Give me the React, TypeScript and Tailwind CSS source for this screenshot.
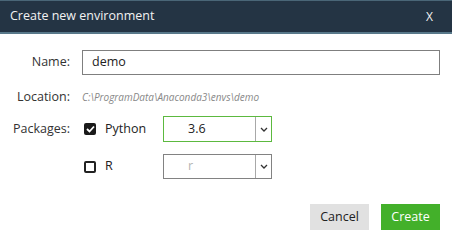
import React from "react";

const font = { fontFamily: '"Open Sans", "Noto Sans", sans-serif' };

function Chevron() {
  return (
    <svg width="8" height="5" viewBox="0 0 8 5" fill="none">
      <path d="M1 1 L4 4 L7 1" stroke="#333" strokeWidth="1.3" />
    </svg>
  );
}

function Select({ value, active, muted }: { value: string; active?: boolean; muted?: boolean }) {
  return (
    <div
      className={`flex h-full w-[109px] border ${active ? "border-[#5cb93f]" : "border-[#828282]"} bg-white`}
    >
      <div className={`flex flex-1 items-center pl-[24px] text-[12.5px] ${muted ? "text-[#b5b5b5]" : "text-[#222]"}`}>
        {value}
      </div>
      <div className="flex w-[16px] items-center justify-center border-l border-[#a8a8a8]">
        <Chevron />
      </div>
    </div>
  );
}

export default function App() {
  return (
    <div className="h-[244px] w-[452px] bg-white" style={font}>
      <div className="flex h-[34px] items-center justify-between border-t border-b-2 border-t-[#4a6677] border-b-[#58788a] bg-[#243444] pl-[10px] pr-[19px] text-[12.5px] text-[#f2f2f2]">
        <span>Create new environment</span>
        <span className="text-[12px]">X</span>
      </div>

      <div className="flex flex-col pr-[12px]">
        <div className="mt-[16px] flex h-[25px] items-center">
          <div className="w-[70px] text-right text-[12.5px] text-[#333]">Name:</div>
          <div className="ml-[12px] flex h-full flex-1 items-center border border-[#7f7f7f] pl-[9px] text-[12.5px] text-[#222]">
            demo
          </div>
        </div>

        <div className="mt-[12px] flex h-[20px] items-center">
          <div className="w-[70px] text-right text-[12.5px] text-[#333]">Location:</div>
          <div className="ml-[12px] text-[10px] italic text-[#888]">C:\ProgramData\Anaconda3\envs\demo</div>
        </div>

        <div className="mt-[9px] flex h-[26px] items-center">
          <div className="w-[70px] text-right text-[12.5px] text-[#333]">Packages:</div>
          <div className="ml-[14px] flex h-[12px] w-[12px] items-center justify-center rounded-[2px] bg-[#1a1a1a]">
            <svg width="9" height="8" viewBox="0 0 9 8" fill="none">
              <path d="M1 4 L3.5 6.5 L8 1.5" stroke="white" strokeWidth="1.8" />
            </svg>
          </div>
          <div className="ml-[9px] w-[58px] text-[12.5px] text-[#222]">Python</div>
          <Select value="3.6" active />
        </div>

        <div className="mt-[12px] flex h-[25px] items-center">
          <div className="w-[70px]" />
          <div className="ml-[14px] h-[12px] w-[12px] rounded-[2px] border-2 border-[#222]" />
          <div className="ml-[9px] w-[58px] text-[12.5px] text-[#222]">R</div>
          <Select value="r" muted />
        </div>

        <div className="mt-[25px] flex h-[26px] justify-end gap-[12px]">
          <div className="flex w-[59px] items-center justify-center bg-[#e1e1e1] text-[12.5px] text-[#222]">Cancel</div>
          <div className="flex w-[59px] items-center justify-center bg-[#43b02a] text-[12.5px] text-white">Create</div>
        </div>
      </div>
    </div>
  );
}
